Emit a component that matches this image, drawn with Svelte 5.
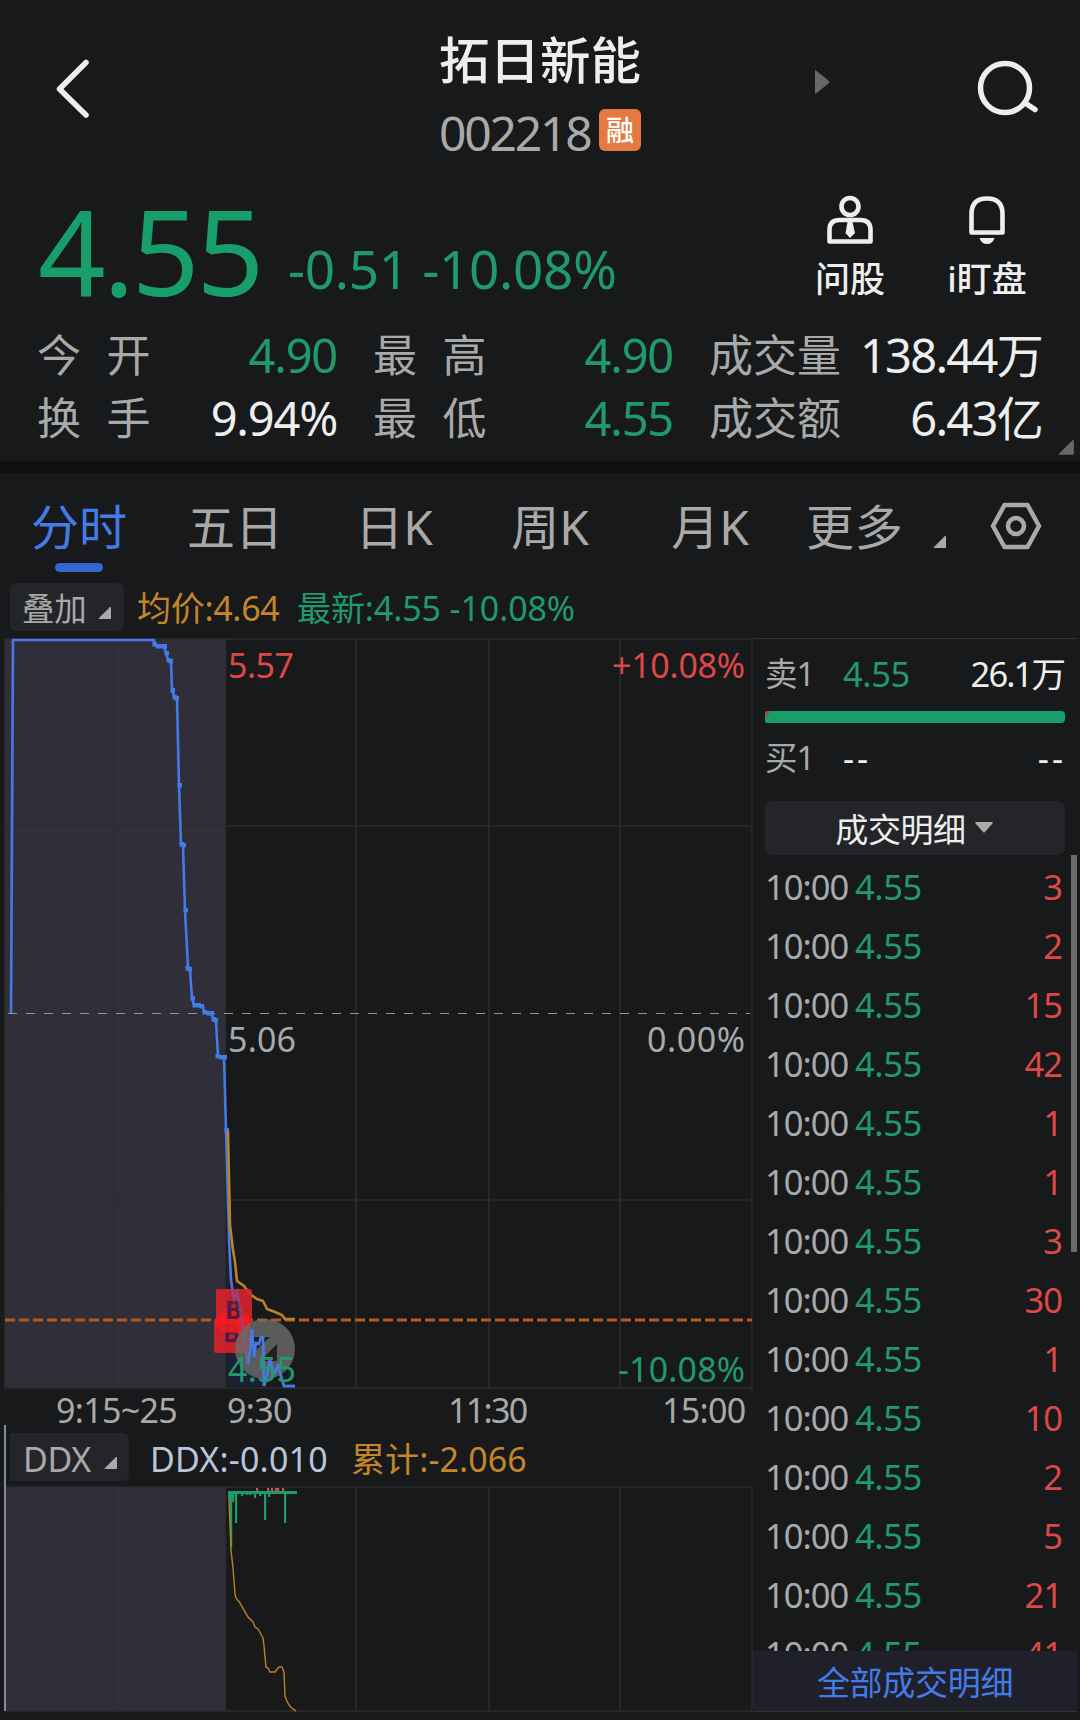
<script>
  const stats = [
    { label: '今开', wide: true, value: '4.90', tone: 'green' },
    { label: '最高', wide: true, value: '4.90', tone: 'green' },
    { label: '成交量', value: '138.44万', tone: 'white' },
    { label: '换手', wide: true, value: '9.94%', tone: 'white' },
    { label: '最低', wide: true, value: '4.55', tone: 'green' },
    { label: '成交额', value: '6.43亿', tone: 'white' }
  ];
  const tabs = ['分时', '五日', '日K', '周K', '月K'];
  const trades = [3, 2, 15, 42, 1, 1, 3, 30, 1, 10, 2, 5, 21, 41];
  const gridX = [356, 489, 620];

  // Auction price ticks drawn as small squares on the line
  const ticks = [
    [154, 644], [157, 646], [161, 646], [164, 646], [166, 653], [168, 660], [170, 661], [172, 690],
    [174, 697], [176, 698], [179, 785], [181, 844], [183, 845], [185, 910], [187, 968], [189, 969],
    [192, 998], [194, 1005], [198, 1005], [201, 1006], [204, 1012], [208, 1013], [211, 1013],
    [213, 1019], [215, 1020], [217, 1056], [221, 1057], [224, 1057], [226, 1130]
  ];
  const price =
    'M11 1013L13 640H154V645L164 646L166 653L168 660L171 662L172 690L175 698L177 699L179 785L181 844L183 846L185 910L188 968L190 970L192 998L194 1005L203 1006L204 1012L212 1013L213 1019L216 1021L218 1057H224L226 1130L229 1240L231 1280L234 1300L237 1292L240 1304L243 1330L245 1345L248 1364L250 1352L252 1329L254 1357L256 1343L259 1344L261 1337H263L264 1386L267 1376L270 1359L274 1374L278 1366L284 1386H295';
  const average =
    'M228 1131L230 1225L233 1250L235 1262L237 1281L244 1286L250 1294L257 1299L263 1301L267 1309L275 1312L282 1315L285 1319H295';

  const bars = [
    [229, 8], [231, 56], [233, 11], [236, 32], [242, 5], [247, 4], [250, 4],
    [255, 7], [260, 5], [265, 29], [269, 6], [275, 3], [281, 3], [285, 32]
  ];
  const reds = [257, 268, 272, 276, 278, 283];
</script>

{#snippet corner()}
  <svg class="corner" viewBox="0 0 14 14"><path d="M13 1V12Q13 13 12 13H1Q0 13 1 12L12 1Z" /></svg>
{/snippet}

<div class="app">
  <header>
    <svg class="back" viewBox="0 0 34 62"><path d="M30 4.500L3.500 31L30 57" /></svg>
    <div class="title">
      <h1>拓日新能</h1>
      <div class="code"><span>002218</span><b>融</b></div>
    </div>
    <svg class="next" viewBox="0 0 15 24"><path d="M0 1Q0 0 1 .5L14 11Q15 12 14 13L1 23.500Q0 24 0 23Z" /></svg>
    <svg class="search" viewBox="0 0 64 60">
      <circle cx="29" cy="30" r="24.500" /><path d="M49 45L59 51.500" />
    </svg>
  </header>

  <section class="quote">
    <strong>4.55</strong>
    <span class="change">-0.51 -10.08%</span>
    <div class="action ask">
      <svg viewBox="0 0 48 50">
        <circle cx="24" cy="11.500" r="8.500" />
        <path d="M3.500 46.500V35Q3.500 25 13.500 25H34.500Q44.500 25 44.500 35V46.500Z" />
        <path class="solid" d="M21.500 27H26.500L29 38L24 43L19.500 38Z" />
      </svg>
      <span>问股</span>
    </div>
    <div class="action watch">
      <svg viewBox="0 0 48 50">
        <path d="M8.500 37.500V19Q8.500 3.500 24 3.500Q39.500 3.500 39.500 19V37.500Z" />
        <path class="solid" d="M16.500 43H31.500Q29.500 49 24 49Q18.500 49 16.500 43Z" />
      </svg>
      <span>i盯盘</span>
    </div>
  </section>

  <section class="stats">
    {#each stats as s}
      <div class="stat">
        <span class="label" class:wide={s.wide}>{s.label}</span>
        <span class="value {s.tone}">{s.value}</span>
      </div>
    {/each}
    <div class="expand">{@render corner()}</div>
  </section>

  <nav>
    {#each tabs as t, i}
      <span class="tab" class:active={i === 0}>{t}</span>
    {/each}
    <span class="more">更多</span>
    {@render corner()}
    <svg class="gear" viewBox="0 0 52 48">
      <path d="M14.500 3H37.500L49 24L37.500 45H14.500L3 24Z" /><circle cx="26" cy="24" r="8" />
    </svg>
  </nav>

  <div class="legend">
    <div class="chip"><span>叠加</span>{@render corner()}</div>
    <span class="avg">均价:4.64</span>
    <span class="last">最新:4.55 -10.08%</span>
  </div>

  <main>
    <section class="charts">
      <svg class="price" viewBox="0 638 754 752">
        <rect class="shade" x="5" y="639" width="220.500" height="749" />
        <g class="grid">
          <path d="M4 639H752M5 826H750M5 1200H750M4 1388H752" />
          <path d="M5 639V1388M114 639V1388M225.500 639V1388M752 639V1390" />
          {#each gridX as x}<path d="M{x} 639V1388" />{/each}
        </g>
        <path class="mid" d="M8 1013.500H750" />
        <path class="fill" d="M227 1240L234 1300L243 1330L248 1364L254 1357L263 1337L265 1386H227Z" />
        <path class="cost" d="M5 1320H752" />
        <path class="line" d={price} />
        {#each ticks as [x, y]}<rect class="tick" x={x - 1.5} y={y - 2} width="4.500" height="4.500" />{/each}
        <path class="average" d={average} />
        <g class="axis">
          <text class="red" x="228" y="678" textLength="66">5.57</text>
          <text class="red" x="612" y="678" textLength="133">+10.08%</text>
          <text x="228" y="1052" textLength="68">5.06</text>
          <text x="647" y="1052" textLength="98">0.00%</text>
          <text class="green" x="618" y="1382" textLength="127">-10.08%</text>
        </g>
        <g class="mark">
          <rect x="216" y="1289" width="36" height="34" rx="2" />
          <rect x="214" y="1319" width="36" height="34" rx="2" />
          <text x="223" y="1342">B</text>
          <ellipse cx="233" cy="1322" rx="18" ry="11" />
          <text x="225" y="1319">B</text>
        </g>
        <path class="ghost" d="M231 1280L234 1300L237 1292L243 1330L248 1364" />
        <circle class="knob" cx="265" cy="1349" r="30" />
        <path class="arrow" d="M252 1337H270L252 1354ZM277 1344V1361H260Z" />
        <path class="line" d="M248 1364L250 1352L252 1329L254 1357L256 1343L259 1344L261 1337H263L264 1386L267 1376L270 1359L274 1374L278 1366L284 1386H295" />
        <text class="low" x="228" y="1382" textLength="68">4.55</text>
      </svg>

      <div class="times">
        <span>9:15~25</span><span>9:30</span><span>11:30</span><span>15:00</span>
      </div>

      <div class="legend sub">
        <div class="chip"><span>DDX</span>{@render corner()}</div>
        <span class="ddx">DDX:-0.010</span>
        <span class="total">累计:-2.066</span>
      </div>

      <svg class="flow" viewBox="0 1486 754 234">
        <rect class="shade" x="5" y="1487" width="220.500" height="224" />
        <g class="grid">
          <path d="M5 1487H752M5 1711H752M114 1487V1711M225.500 1487V1711M752 1486V1711" />
          {#each gridX as x}<path d="M{x} 1487V1711" />{/each}
        </g>
        <path class="edge" d="M5 1486V1711" />
        <rect class="bar" x="228" y="1491" width="69" height="3" />
        {#each bars as [x, h]}<rect class="bar" x={x - 1} y="1491" width="2.200" height={h} />{/each}
        {#each reds as x}<rect class="up" x={x - 1} y="1488" width="2.200" height="3" />{/each}
        <path class="sum" d="M229 1499L231 1550L233 1568L235 1594L236 1598L240 1603L248 1617L253 1622L255 1627L258 1629L263 1638L264 1646L266 1667L268 1668L270 1672H275L279 1667H282L284 1672L285 1696Q288 1707 296 1711" />
      </svg>
    </section>

    <aside>
      <div class="order"><span>卖1</span><span class="green">4.55</span><span class="qty">26.1万</span></div>
      <div class="ratio"></div>
      <div class="order buy">
        <span>买1</span><span class="none">--</span><span class="qty none">--</span>
      </div>
      <div class="picker">成交明细<svg viewBox="0 0 18 11"><path d="M1 0H17Q18.500 .5 17 2L10 10Q9 11 8 10L1 2Q-.5 .5 1 0Z" /></svg></div>
      <div class="trades">
        {#each trades as n}
          <div class="trade"><span>10:00</span><span class="green">4.55</span><span class="n">{n}</span></div>
        {/each}
        <i class="scroll"></i>
      </div>
      <div class="all">全部成交明细</div>
    </aside>
  </main>
</div>

<style>
  :global(body) { background: #17191a; }
  .app {
    width: 1080px;
    height: 1720px;
    overflow: hidden;
    display: flex;
    flex-direction: column;
    background: #17191a;
    color: #a9a9a9;
    font-family: 'Noto Sans', 'Noto Sans CJK SC', sans-serif;
    white-space: nowrap;
  }
  .app * { box-sizing: border-box; }
  svg { display: block; flex: none; fill: none; }
  .green { color: #20996c; }
  .white { color: #eee; }

  header { height: 180px; display: flex; align-items: flex-start; }
  .back { width: 34px; height: 62px; margin: 58px 0 0 56px; stroke: #eee; stroke-width: 5.500; stroke-linecap: round; stroke-linejoin: round; }
  .title { width: 202px; margin-left: 349px; padding-top: 30px; }
  h1 { margin: 0; font-size: 50.500px; line-height: 60px; font-weight: 500; color: #eee; }
  .code { height: 84px; display: flex; align-items: center; margin-top: -2px; }
  .code span { width: 160px; font-size: 48px; letter-spacing: -2.200px; line-height: 60px; padding-top: 5px; }
  .code b { width: 42px; height: 42px; border-radius: 6px; background: #e47a42; color: #fff; font-weight: 500; font-size: 28px; line-height: 42px; text-align: center; }
  .next { width: 15px; height: 24px; margin: 70px 0 0 174px; fill: #686868; }
  .search { width: 64px; height: 60px; margin: 58px 0 0 146px; stroke: #eee; stroke-width: 5.500; stroke-linecap: round; }

  .quote { height: 142px; display: flex; align-items: flex-start; padding-left: 38px; }
  strong { width: 250px; font-size: 118.500px; font-weight: 400; line-height: 140px; letter-spacing: -2.900px; color: #179e6b; }
  .change { width: 526px; font-size: 53px; line-height: 60px; margin-top: 59px; letter-spacing: -.3px; color: #20996c; }
  .action { display: flex; flex-direction: column; align-items: center; padding-top: 15px; color: #eee; font-size: 35px; line-height: 40px; gap: 14px; font-weight: 500; }
  .action svg { width: 48px; height: 50px; stroke: #eee; stroke-width: 4.600; stroke-linejoin: round; }
  .action .solid { fill: #eee; stroke: none; }
  .ask { width: 72px; }
  .watch { width: 84px; margin-left: 59px; }

  .stats { position: relative; height: 139px; display: grid; grid-template-columns: 300px 300px 333px; column-gap: 36px; grid-auto-rows: 63px; padding: 2px 0 0 37px; }
  .stat { display: flex; justify-content: space-between; line-height: 63px; }
  .label { font-size: 44px; }
  .wide { letter-spacing: 25.500px; }
  .value { font-size: 47px; letter-spacing: -1.200px; }
  .stat:nth-child(3n) .value { letter-spacing: -1.700px; }
  .expand { position: absolute; right: 5px; bottom: 5px; color: #686868; }
  .corner { width: 14px; height: 14px; fill: currentColor; }
  .expand .corner { width: 17px; height: 17px; }

  nav { height: 122px; border-top: 12px solid #0f1011; display: flex; align-items: flex-start; font-size: 48px; line-height: 108px; }
  .tab { width: 158px; text-align: center; position: relative; }
  .tab:nth-child(2) { width: 154px; }
  .tab:nth-child(3) { width: 164px; }
  .tab:nth-child(4) { width: 148px; }
  .tab:nth-child(5) { width: 172px; }
  .active { color: #437be8; }
  .active::after { content: ''; position: absolute; left: 55px; top: 90px; width: 48px; height: 9px; border-radius: 5px; background: #3367ce; }
  .more { margin-left: 10px; width: 127px; letter-spacing: .8px; }
  nav .corner { margin-top: 62px; }
  .gear { width: 52px; height: 48px; margin: 29px 0 0 43px; stroke: #a9a9a9; stroke-width: 4.500; stroke-linejoin: round; }

  .legend { height: 55px; display: flex; align-items: flex-start; padding-left: 10px; font-size: 34px; line-height: 50px; letter-spacing: -.3px; }
  .chip { height: 48px; width: 114px; display: flex; align-items: center; border-radius: 6px; background: #242529; padding-left: 12px; color: #a9a9a9; }
  .chip span { width: 76px; font-size: 32.500px; padding-top: 4px; }
  .chip .corner { margin-top: 12px; }
  .avg { margin-left: 13px; width: 160px; color: #c4862a; }
  .last { color: #20996c; letter-spacing: -.1px; }

  main { flex: 1; display: flex; }
  .charts { width: 753px; }
  .price { width: 754px; height: 752px; }
  .shade { fill: #2f2e39; }
  .grid { stroke: #2b2c2e; stroke-width: 1.500; }
  .mid { stroke: #8b979b; stroke-width: 1; stroke-dasharray: 9 9; }
  .fill { fill: #1b2034; }
  .cost { stroke: #b9591c; stroke-width: 3; stroke-dasharray: 10 4; }
  .line { stroke: #4579e6; stroke-width: 2.600; }
  .tick { fill: #437be8; }
  .average { stroke: #b98326; stroke-width: 2.600; }
  .axis text, .low { font-size: 34px; fill: #a9a9a9; }
  .axis .red { fill: #dc4848; }
  .axis .green, .low { fill: #20996c; }
  .mark rect { fill: #d9212a; opacity: .9; }
  .mark ellipse { fill: #f81c20; opacity: .8; }
  .mark text { fill: #501c40; font-size: 25px; font-weight: 700; }
  .ghost { stroke: #7355a5; stroke-width: 2.400; opacity: .6; }
  .knob { fill: #6c6c6c; opacity: .8; }
  .arrow { fill: #202224; }

  .times { height: 35px; display: grid; grid-template-columns: 171px 221px 214px 1fr; padding-left: 56px; font-size: 34px; line-height: 40px; letter-spacing: -.7px; }
  .times span:nth-child(3) { letter-spacing: -1.700px; }
  .sub { height: 61px; margin-left: 4px; padding: 8px 0 0 4px; border-left: 2px solid #858b98; line-height: 53px; }
  .sub .chip { width: 119px; border-radius: 0 6px 6px 0; padding-left: 13px; }
  .sub .chip span { width: 81px; font-size: 34px; }
  .ddx { margin-left: 21px; width: 201px; color: #bac5da; letter-spacing: .2px; }
  .total { color: #c4862a; letter-spacing: .1px; }
  .flow { width: 754px; height: 234px; }
  .edge { stroke: #858b98; stroke-width: 2; }
  .bar { fill: #20996c; }
  .up { fill: #c85050; }
  .sum { stroke: #b98326; stroke-width: 1.400; }

  aside { width: 324px; border-top: 1px solid #333436; height: 1074px; font-size: 34.500px; letter-spacing: -1px; display: flex; flex-direction: column; padding-top: 11px; }
  .order { display: grid; grid-template-columns: 78px 90px 1fr; padding: 0 13px 0 12px; line-height: 48px; height: 48px; }
  .order > span:first-child { font-size: 32.500px; }
  .order .green, .trade .green { letter-spacing: -.4px; }
  .buy { line-height: 44px; }
  .qty { text-align: right; color: #eee; letter-spacing: -1.900px; }
  .none { color: #eee; letter-spacing: 3px; }
  .order .qty.none { margin-right: -2px; }
  .ratio { flex: none; height: 12px; margin: 13px 12px; border-radius: 2px 4px 4px 2px; background: linear-gradient(135deg, #a04a42 4px, #179e6b 5px); }
  .picker { flex: none; height: 54px; margin: 17px 12px 0; border-radius: 7px; background: #242529; color: #eee; font-size: 33px; line-height: 54px; letter-spacing: -.4px; display: flex; justify-content: center; align-items: center; gap: 9px; padding: 3px 2px 0 0; }
  .picker svg { width: 18px; height: 11px; fill: #a9a9a9; margin-top: -4px; }
  .trades { flex: none; position: relative; height: 796px; overflow: hidden; padding-top: 2px; }
  .trade { height: 59px; line-height: 59px; display: grid; grid-template-columns: 90px 90px 1fr; padding: 0 15px 0 12px; }
  .n { text-align: right; color: #dc4848; }
  .scroll { position: absolute; right: 0; top: 0; width: 6px; height: 397px; background: #6b6b6b; }
  .all { flex: none; height: 61px; background: #20202a; border-bottom: 1px solid #333436; color: #437be8; font-size: 33px; line-height: 63px; letter-spacing: -.3px; text-align: center; }
</style>
